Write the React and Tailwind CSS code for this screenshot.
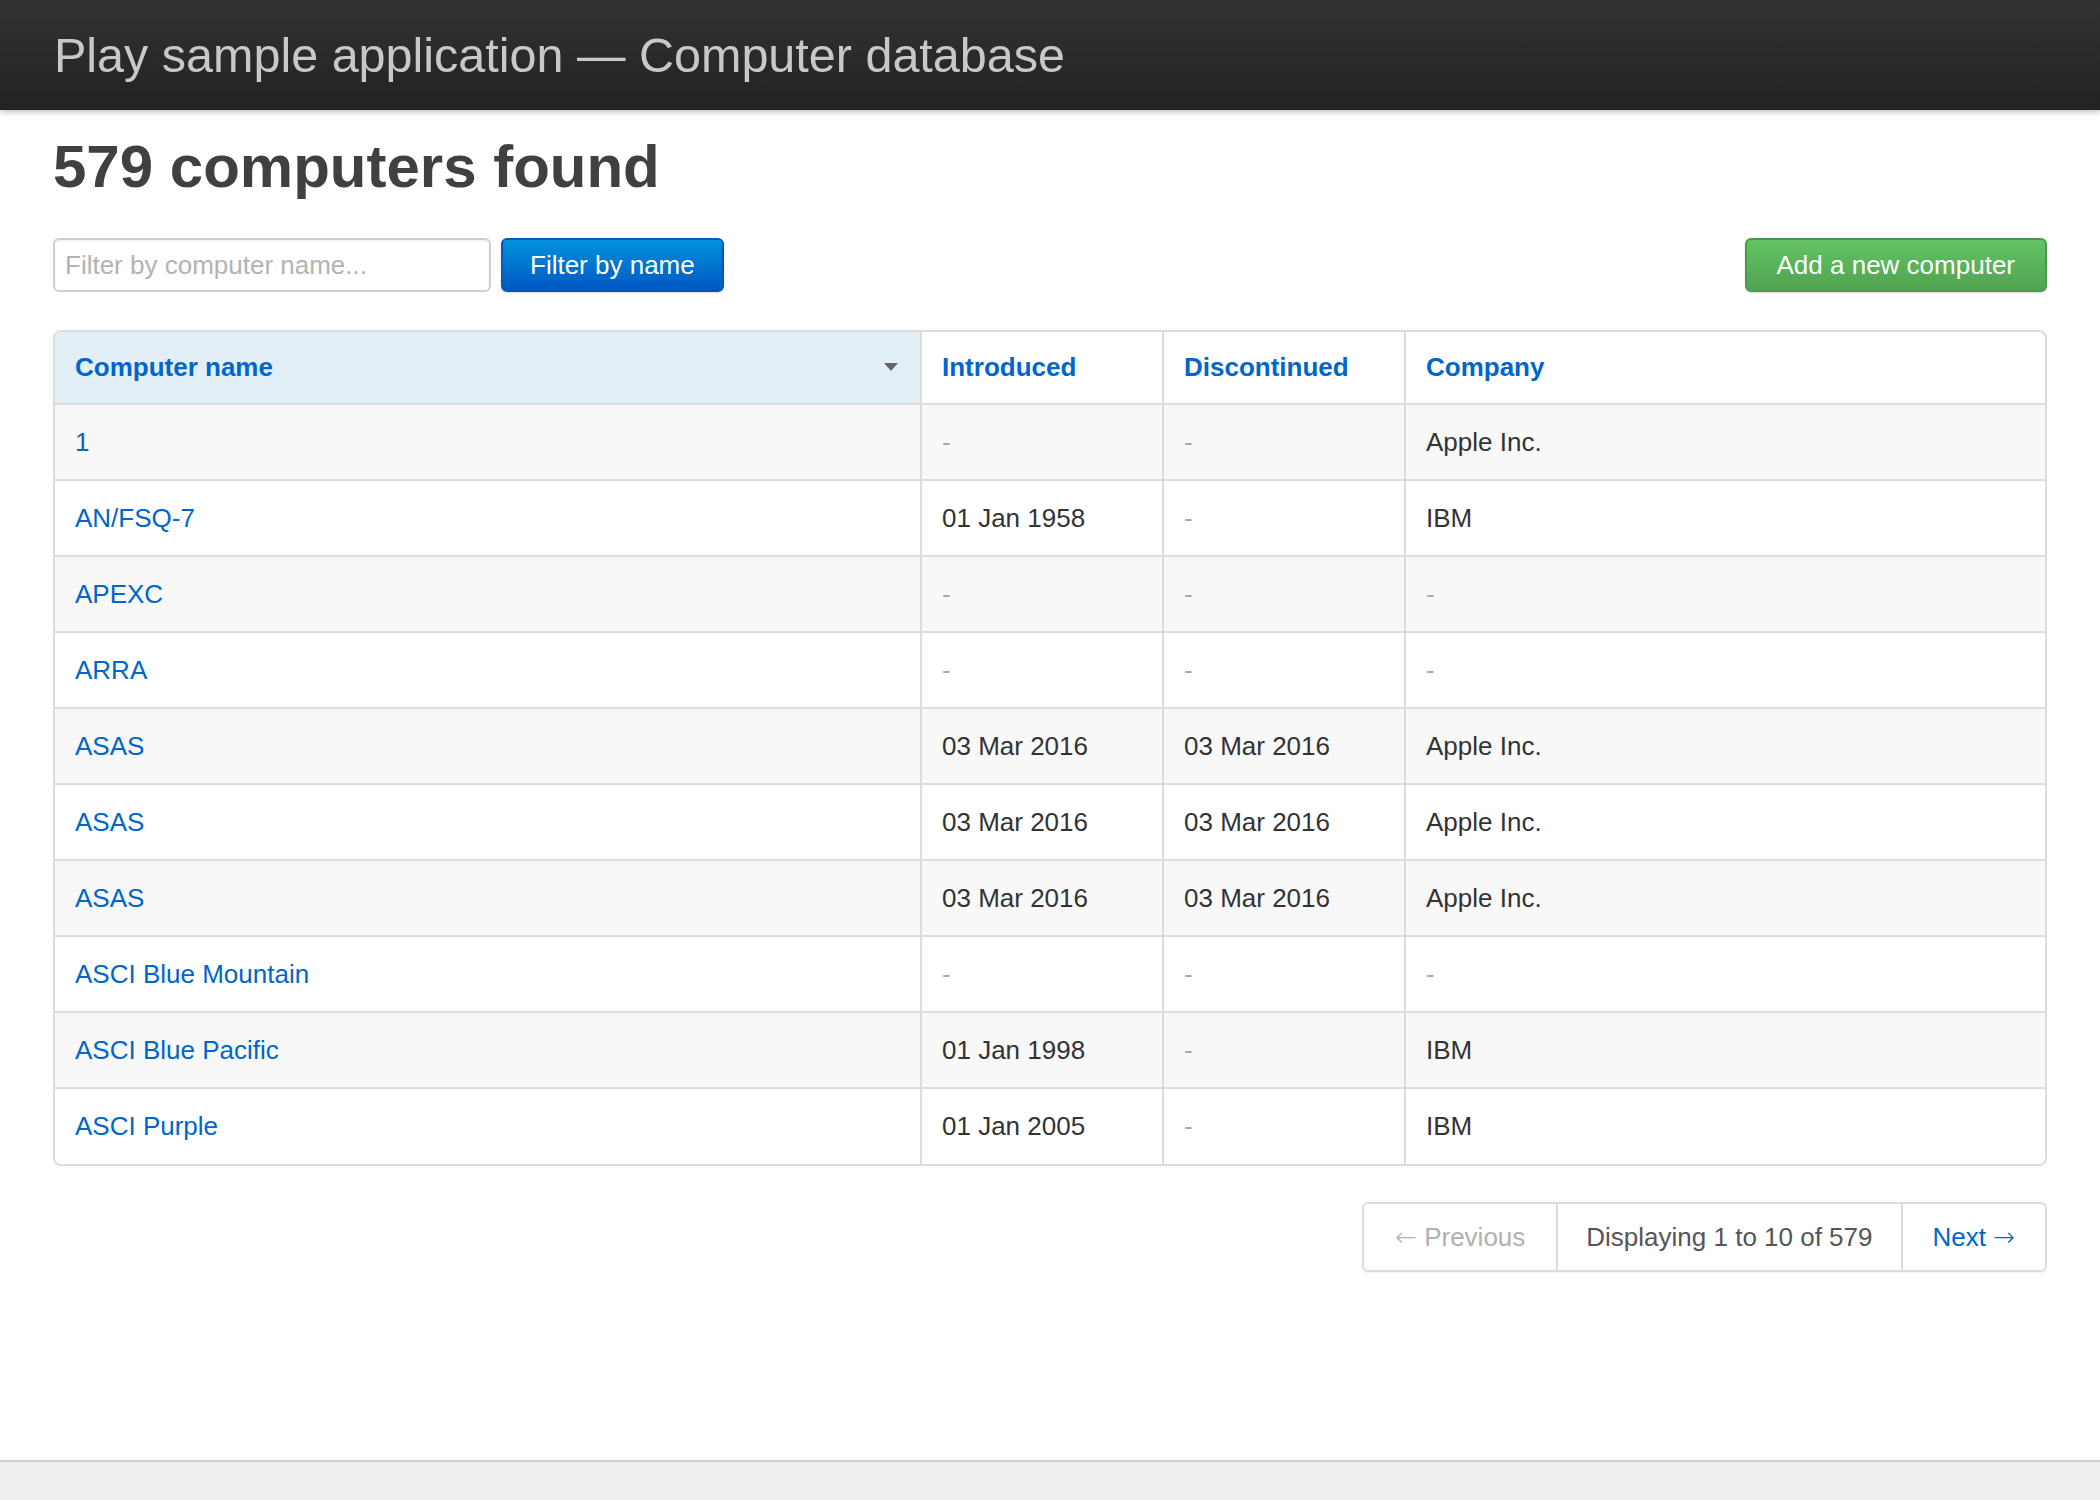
import React from "react";

const computers = [
  { name: "1", introduced: null, discontinued: null, company: "Apple Inc." },
  { name: "AN/FSQ-7", introduced: "01 Jan 1958", discontinued: null, company: "IBM" },
  { name: "APEXC", introduced: null, discontinued: null, company: null },
  { name: "ARRA", introduced: null, discontinued: null, company: null },
  { name: "ASAS", introduced: "03 Mar 2016", discontinued: "03 Mar 2016", company: "Apple Inc." },
  { name: "ASAS", introduced: "03 Mar 2016", discontinued: "03 Mar 2016", company: "Apple Inc." },
  { name: "ASAS", introduced: "03 Mar 2016", discontinued: "03 Mar 2016", company: "Apple Inc." },
  { name: "ASCI Blue Mountain", introduced: null, discontinued: null, company: null },
  { name: "ASCI Blue Pacific", introduced: "01 Jan 1998", discontinued: null, company: "IBM" },
  { name: "ASCI Purple", introduced: "01 Jan 2005", discontinued: null, company: "IBM" }
];

const Cell = ({ value }) =>
  value ? <span>{value}</span> : <em className="not-italic text-[#aaa]">-</em>;

const Arrow = ({ children }) => (
  <span className="font-['DejaVu_Sans',sans-serif] font-light">{children}</span>
);

const App = () => {
  return (
    <div className="min-h-screen flex flex-col bg-white font-['Liberation_Sans',Arial,sans-serif] text-[26px] text-[#333]">
      {/* Header */}
      <header className="h-[110px] flex items-center px-[54px] bg-gradient-to-b from-[#333333] to-[#222222] shadow-[0_2px_6px_rgba(0,0,0,0.25)]">
        <h1 className="text-[48.5px] text-[#c8c8c8] leading-none">
          Play sample application — Computer database
        </h1>
      </header>

      <main className="flex-1 px-[53px]">
        <h1 className="mt-[19px] text-[60px] leading-[76px] font-bold text-[#404040]">579 computers found</h1>

        {/* Actions */}
        <div className="mt-[33px] flex items-center justify-between">
          <form className="flex items-center gap-[10px]" onSubmit={(e) => e.preventDefault()}>
            <input
              type="search"
              placeholder="Filter by computer name..."
              className="w-[438px] h-[54px] px-[10px] border-2 border-[#cfcfcf] rounded-[6px] text-[26px] placeholder-[#b3b3b3] outline-none shadow-[inset_0_1px_2px_rgba(0,0,0,0.08)]"
            />
            <button
              type="submit"
              className="h-[54px] px-[27px] rounded-[6px] text-white bg-gradient-to-b from-[#0591db] to-[#0058c4] border-2 border-[#0559b8] shadow-[0_1px_2px_rgba(0,0,0,0.15)]"
            >
              Filter by name
            </button>
          </form>
          <a
            href="#"
            className="h-[54px] px-[30px] flex items-center rounded-[6px] text-white bg-gradient-to-b from-[#62c462] to-[#51a351] border-2 border-[#4b9a4b] shadow-[0_1px_2px_rgba(0,0,0,0.15)]"
          >
            Add a new computer
          </a>
        </div>

        {/* Table */}
        <div className="mt-[38px] border-2 border-[#dcdcdc] rounded-[8px] overflow-hidden">
          <table className="w-full table-fixed border-collapse">
            <colgroup>
              <col className="w-[866px]" />
              <col className="w-[242px]" />
              <col className="w-[242px]" />
              <col />
            </colgroup>
            <thead>
              <tr className="h-[72px]">
                <th className="bg-[#e2eff6] text-left px-[20px] font-bold text-[#0066cc]">
                  <div className="flex items-center justify-between">
                    <span>Computer name</span>
                    <svg width="14" height="9" viewBox="0 0 14 9" className="mr-[2px]">
                      <path d="M0 0 L14 0 L7 8 Z" fill="#666" />
                    </svg>
                  </div>
                </th>
                <th className="border-l-2 border-[#dcdcdc] text-left px-[20px] font-bold text-[#0066cc]">Introduced</th>
                <th className="border-l-2 border-[#dcdcdc] text-left px-[20px] font-bold text-[#0066cc]">Discontinued</th>
                <th className="border-l-2 border-[#dcdcdc] text-left px-[20px] font-bold text-[#0066cc]">Company</th>
              </tr>
            </thead>
            <tbody>
              {computers.map((c, i) => (
                <tr key={i} className={`h-[76px] border-t-2 border-[#dcdcdc] ${i % 2 === 0 ? "bg-[#f8f8f8]" : "bg-white"}`}>
                  <td className="px-[20px] text-[#0066cc]">
                    <a href="#">{c.name}</a>
                  </td>
                  <td className="px-[20px] border-l-2 border-[#dcdcdc]"><Cell value={c.introduced} /></td>
                  <td className="px-[20px] border-l-2 border-[#dcdcdc]"><Cell value={c.discontinued} /></td>
                  <td className="px-[20px] border-l-2 border-[#dcdcdc]"><Cell value={c.company} /></td>
                </tr>
              ))}
            </tbody>
          </table>
        </div>

        {/* Pagination */}
        <div className="mt-[36px] flex justify-end">
          <ul className="flex h-[70px] border-2 border-[#dcdcdc] rounded-[6px] shadow-[0_1px_2px_rgba(0,0,0,0.06)]">
            <li className="flex items-center px-[31px] text-[#b0b0b0]">
              <Arrow>←</Arrow>&nbsp;Previous
            </li>
            <li className="flex items-center px-[28px] border-l-2 border-[#dcdcdc] text-[#555]">Displaying 1 to 10 of 579</li>
            <li className="flex items-center px-[30px] border-l-2 border-[#dcdcdc] text-[#0066cc]">
              <a href="#">Next&nbsp;<Arrow>→</Arrow></a>
            </li>
          </ul>
        </div>
      </main>

      <footer className="h-[40px] bg-[#eeeeee] border-t-2 border-[#cccccc]" />
    </div>
  );
};

export default App;
